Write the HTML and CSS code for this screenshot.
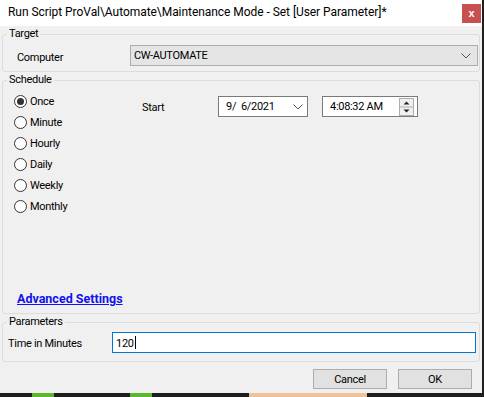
FILE: index.html
```html
<!DOCTYPE html>
<html lang="en">
<head>
    <meta charset="UTF-8">
    <title>Run Script</title>
    <link rel="stylesheet" href="styles.css">
</head>
<body>

    <div class="window">
        <!-- Title bar -->
        <div class="titlebar">
            <span class="title">Run Script ProVal\Automate\Maintenance Mode - Set [User Parameter]*</span>
            <button class="close">x</button>
        </div>

        <!-- Target -->
        <fieldset class="group target">
            <legend>Target</legend>
            <div class="target-row">
                <span class="field-label">Computer</span>
                <div class="combo">
                    <span>CW-AUTOMATE</span>
                    <svg class="chevron" width="10" height="6" viewBox="0 0 10 6"><path d="M0.5 0.5 L5 5 L9.5 0.5" fill="none" stroke="#555" stroke-width="1"/></svg>
                </div>
            </div>
        </fieldset>

        <!-- Schedule -->
        <fieldset class="group schedule">
            <legend>Schedule</legend>
            <div class="schedule-body">
                <div class="radios">
                    <label class="radio checked"><span class="circle"></span>Once</label>
                    <label class="radio"><span class="circle"></span>Minute</label>
                    <label class="radio"><span class="circle"></span>Hourly</label>
                    <label class="radio"><span class="circle"></span>Daily</label>
                    <label class="radio"><span class="circle"></span>Weekly</label>
                    <label class="radio"><span class="circle"></span>Monthly</label>
                </div>
                <div class="start">
                    <span class="start-label">Start</span>
                    <div class="date">
                        <span>9/&nbsp; 6/2021</span>
                        <svg class="chevron" width="10" height="6" viewBox="0 0 10 6"><path d="M0.5 0.5 L5 5 L9.5 0.5" fill="none" stroke="#555" stroke-width="1"/></svg>
                    </div>
                    <div class="time">
                        <span>4:08:32 AM</span>
                        <svg class="spin" width="15" height="18" viewBox="0 0 15 18">
                            <rect x="0.5" y="0.5" width="14" height="17" fill="#f0f0f0" stroke="#adadad"/>
                            <line x1="1" y1="9" x2="14" y2="9" stroke="#adadad"/>
                            <path d="M4.5 6.5 L7.5 3.5 L10.5 6.5 Z" fill="#222"/>
                            <path d="M4.5 11.5 L7.5 14.5 L10.5 11.5 Z" fill="#222"/>
                        </svg>
                    </div>
                </div>
            </div>
            <a class="advanced" href="#">Advanced Settings</a>
        </fieldset>

        <!-- Parameters -->
        <fieldset class="group params">
            <legend>Parameters</legend>
            <div class="param-row">
                <span class="param-label">Time in Minutes</span>
                <div class="text-input"><span class="value">120</span></div>
            </div>
        </fieldset>

        <div class="buttons">
            <button class="btn">Cancel</button>
            <button class="btn">OK</button>
        </div>
    </div>

    <!-- Desktop taskbar peeking below -->
    <div class="taskbar">
        <span class="task green first"></span>
        <span class="task green second"></span>
        <span class="task peach"></span>
    </div>

</body>
</html>
```

FILE: styles.css
```css
* {
    margin: 0;
    padding: 0;
    box-sizing: border-box;
}

body {
    font-family: Roboto, "Liberation Sans", sans-serif;
    font-size: 11px;
    letter-spacing: -0.3px;
    color: #000;
    background-color: #1f1f1f;
    width: 484px;
    height: 397px;
    overflow: hidden;
}

.window {
    width: 482px;
    height: 393px;
    padding-bottom: 4px;
    background-color: #f0f0f0;
    display: flex;
    flex-direction: column;
}

/* Title bar */
.titlebar {
    height: 26px;
    flex-shrink: 0;
    background-color: #fff;
    display: flex;
    align-items: flex-start;
}

.title {
    font-size: 12px;
    letter-spacing: -0.05px;
    line-height: 16px;
    margin-top: 4px;
    margin-left: 8px;
    white-space: nowrap;
}

.close {
    margin-left: auto;
    margin-top: 4px;
    margin-right: 1px;
    width: 19px;
    height: 19px;
    border: none;
    background-color: #c75050;
    color: #fff;
    font-family: "Liberation Sans", sans-serif;
    font-weight: bold;
    font-size: 11px;
    line-height: 17px;
}

/* Group boxes */
.group {
    margin: 1px 2px 0;
    padding: 0;
    border: 1px solid #dcdcdc;
    border-radius: 3px;
    min-width: 0;
    flex-shrink: 0;
}

.group legend {
    margin-left: 4px;
    padding: 0 2px;
    line-height: 14px;
}

.target-row {
    display: flex;
    align-items: flex-start;
    padding: 4px 1px 5px 14px;
}

.field-label {
    width: 113px;
    margin-top: 6px;
    line-height: 14px;
}

.combo {
    flex: 1;
    height: 21px;
    background-color: #e5e5e5;
    border: 1px solid #adadad;
    display: flex;
    align-items: center;
    justify-content: space-between;
    padding: 0 6px 0 3px;
}

.schedule {
    flex: 1 1 0;
    min-height: 0;
    display: flex;
    flex-direction: column;
}

.schedule-body {
    display: flex;
    align-items: flex-start;
}

.radios {
    width: 139px;
    padding: 4px 0 0 11px;
    display: flex;
    flex-direction: column;
}

.radio {
    height: 21px;
    display: flex;
    align-items: center;
    gap: 3px;
}

.circle {
    width: 13px;
    height: 13px;
    border: 1px solid #333;
    border-radius: 50%;
    background-color: #fff;
    display: flex;
    align-items: center;
    justify-content: center;
}

.radio.checked .circle::after {
    content: "";
    width: 7px;
    height: 7px;
    border-radius: 50%;
    background-color: #333;
}

.start {
    margin-top: 9px;
    display: flex;
    align-items: flex-start;
}

.start-label {
    width: 76px;
    margin-top: 4px;
    line-height: 16px;
}

.date,
.time {
    height: 21px;
    background-color: #fff;
    border: 1px solid #7a7a7a;
    display: flex;
    align-items: center;
    justify-content: space-between;
    padding-left: 7px;
}

.date {
    width: 90px;
    padding-right: 4px;
}

.time {
    width: 96px;
    margin-left: 14px;
    padding-right: 3px;
}

.advanced {
    margin-top: auto;
    margin-bottom: 6px;
    padding-left: 14px;
    line-height: 16px;
    font-size: 12.5px;
    letter-spacing: 0;
    font-weight: bold;
    color: #1010f0;
    text-decoration: underline;
}

/* Parameters */
.param-row {
    display: flex;
    align-items: center;
    padding: 3px 3px 8px 5px;
}

.param-label {
    width: 104px;
    margin-top: 1px;
}

.text-input {
    flex: 1;
    height: 21px;
    background-color: #fff;
    border: 1px solid #0078d7;
    display: flex;
    align-items: center;
    padding-left: 3px;
}

.value::after {
    content: "";
    display: inline-block;
    width: 1px;
    height: 13px;
    margin-left: 1px;
    vertical-align: -2px;
    background-color: #000;
}

/* Dialog buttons */
.buttons {
    margin-top: 7px;
    padding-right: 10px;
    display: flex;
    flex-shrink: 0;
    justify-content: flex-end;
    gap: 11px;
}

.btn {
    width: 74px;
    height: 20px;
    background-color: #e1e1e1;
    border: 1px solid #adadad;
    font-family: inherit;
    font-size: 11px;
    letter-spacing: inherit;
    color: #000;
}

/* Taskbar strip */
.taskbar {
    height: 4px;
    display: flex;
}

.task {
    height: 4px;
}

.green {
    width: 22px;
    background-color: #5cb82e;
}

.first {
    margin-left: 32px;
}

.second {
    margin-left: 76px;
}

.peach {
    width: 118px;
    margin-left: 97px;
    background-color: #eec39c;
}
```
